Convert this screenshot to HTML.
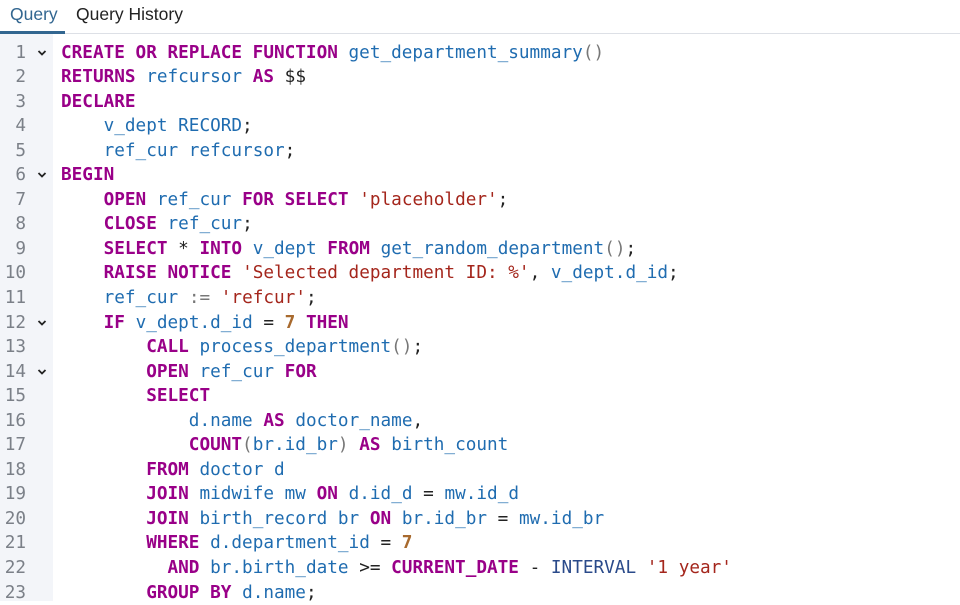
<!DOCTYPE html><html><head><style>
body{margin:0;width:960px;height:601px;overflow:hidden;background:#fff;font-family:"Liberation Sans",sans-serif}
.tabs{position:absolute;top:0;left:0;width:960px;height:33px;border-bottom:1px solid #dde0e6}
.tab{position:absolute;top:4px;font-size:17.5px;color:#222}
.ul{position:absolute;left:0;top:31px;width:65px;height:3px;background:#326690}
.gut{position:absolute;left:0;top:34px;width:53px;height:567px;background:#f3f5f9}
.code{position:absolute;top:40.5px;left:0;font-family:"DejaVu Sans Mono",monospace;font-size:17.7px;line-height:24.55px;color:#222}
.r{position:relative;height:24.55px}
.ln{position:absolute;left:0;width:26px;text-align:right;color:#7b8088}
.cv{position:absolute;left:37px;top:8px;width:10px;height:8px}
.tx{position:absolute;left:61px;white-space:pre}
k{color:#990088;font-weight:bold}
i{font-style:normal;color:#1f6cb0}
s{text-decoration:none;color:#a4261c}
n{color:#a86a2e;font-weight:bold}
g{color:#777}
</style></head><body>
<div class="tabs"><span class="tab" style="left:10px;color:#326690">Query</span><span class="tab" style="left:76px">Query History</span></div>
<div class="ul"></div>
<div class="gut"></div>
<div class="code"><div class="r"><span class="ln">1</span><svg class="cv" viewBox="0 0 10 8"><path d="M1.5 2 L5 5.5 L8.5 2" fill="none" stroke="#222" stroke-width="1.8"/></svg><span class="tx"><k>CREATE OR REPLACE FUNCTION</k> <i>get_department_summary</i><g>()</g></span></div><div class="r"><span class="ln">2</span><span class="tx"><k>RETURNS</k> <i>refcursor</i> <k>AS</k> $$</span></div><div class="r"><span class="ln">3</span><span class="tx"><k>DECLARE</k></span></div><div class="r"><span class="ln">4</span><span class="tx">    <i>v_dept RECORD</i>;</span></div><div class="r"><span class="ln">5</span><span class="tx">    <i>ref_cur refcursor</i>;</span></div><div class="r"><span class="ln">6</span><svg class="cv" viewBox="0 0 10 8"><path d="M1.5 2 L5 5.5 L8.5 2" fill="none" stroke="#222" stroke-width="1.8"/></svg><span class="tx"><k>BEGIN</k></span></div><div class="r"><span class="ln">7</span><span class="tx">    <k>OPEN</k> <i>ref_cur</i> <k>FOR SELECT</k> <s>'placeholder'</s>;</span></div><div class="r"><span class="ln">8</span><span class="tx">    <k>CLOSE</k> <i>ref_cur</i>;</span></div><div class="r"><span class="ln">9</span><span class="tx">    <k>SELECT</k> * <k>INTO</k> <i>v_dept</i> <k>FROM</k> <i>get_random_department</i><g>()</g>;</span></div><div class="r"><span class="ln">10</span><span class="tx">    <k>RAISE NOTICE</k> <s>'Selected department ID: %'</s>, <i>v_dept.d_id</i>;</span></div><div class="r"><span class="ln">11</span><span class="tx">    <i>ref_cur</i> <g>:=</g> <s>'refcur'</s>;</span></div><div class="r"><span class="ln">12</span><svg class="cv" viewBox="0 0 10 8"><path d="M1.5 2 L5 5.5 L8.5 2" fill="none" stroke="#222" stroke-width="1.8"/></svg><span class="tx">    <k>IF</k> <i>v_dept.d_id</i> = <n>7</n> <k>THEN</k></span></div><div class="r"><span class="ln">13</span><span class="tx">        <k>CALL</k> <i>process_department</i><g>()</g>;</span></div><div class="r"><span class="ln">14</span><svg class="cv" viewBox="0 0 10 8"><path d="M1.5 2 L5 5.5 L8.5 2" fill="none" stroke="#222" stroke-width="1.8"/></svg><span class="tx">        <k>OPEN</k> <i>ref_cur</i> <k>FOR</k></span></div><div class="r"><span class="ln">15</span><span class="tx">        <k>SELECT</k></span></div><div class="r"><span class="ln">16</span><span class="tx">            <i>d.name</i> <k>AS</k> <i>doctor_name</i>,</span></div><div class="r"><span class="ln">17</span><span class="tx">            <k>COUNT</k><g>(</g><i>br.id_br</i><g>)</g> <k>AS</k> <i>birth_count</i></span></div><div class="r"><span class="ln">18</span><span class="tx">        <k>FROM</k> <i>doctor d</i></span></div><div class="r"><span class="ln">19</span><span class="tx">        <k>JOIN</k> <i>midwife mw</i> <k>ON</k> <i>d.id_d</i> = <i>mw.id_d</i></span></div><div class="r"><span class="ln">20</span><span class="tx">        <k>JOIN</k> <i>birth_record br</i> <k>ON</k> <i>br.id_br</i> = <i>mw.id_br</i></span></div><div class="r"><span class="ln">21</span><span class="tx">        <k>WHERE</k> <i>d.department_id</i> = <n>7</n></span></div><div class="r"><span class="ln">22</span><span class="tx">          <k>AND</k> <i>br.birth_date</i> &gt;= <k>CURRENT_DATE</k> - <i style="color:#2a4a8a">INTERVAL</i> <s>'1 year'</s></span></div><div class="r"><span class="ln">23</span><span class="tx">        <k>GROUP BY</k> <i>d.name</i>;</span></div></div>
</body></html>
